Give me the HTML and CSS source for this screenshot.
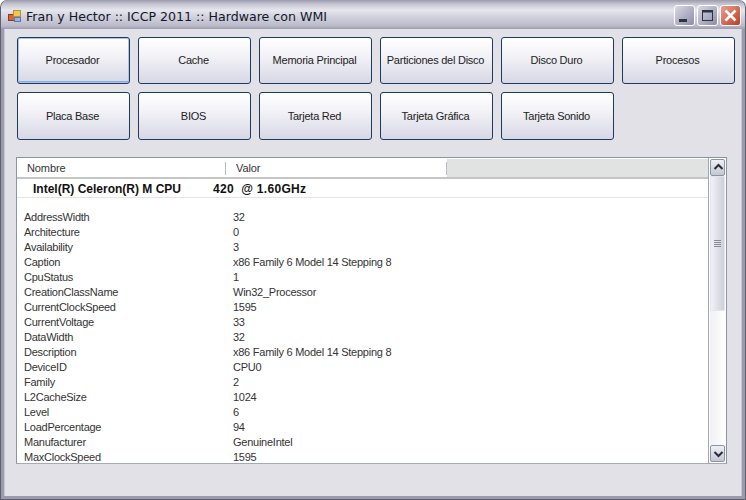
FILE: index.html
```html
<!DOCTYPE html>
<html lang="es">
<head>
<meta charset="utf-8">
<title>Fran y Hector :: ICCP 2011 :: Hardware con WMI</title>
<link rel="stylesheet" href="styles.css">
</head>
<body>
<div class="window">
  <header class="titlebar">
    <svg class="app-icon" width="16" height="16" viewBox="0 0 16 16">
      <rect x="1.5" y="6.5" width="6" height="6" fill="#d8623a" stroke="#8a3a20"/>
      <rect x="6.5" y="2.5" width="7" height="6" fill="#f2c84a" stroke="#b8923a"/>
      <rect x="7.5" y="9.5" width="6" height="4" fill="#9ab4e0" stroke="#5a78b0"/>
    </svg>
    <span class="title">Fran y Hector :: ICCP 2011 :: Hardware con WMI</span>
    <div class="controls">
      <div class="ctl ctl-min"><svg width="21" height="21" viewBox="0 0 21 21"><rect x="5" y="14" width="8" height="3" fill="#2c3444"/></svg></div>
      <div class="ctl ctl-max"><svg width="21" height="21" viewBox="0 0 21 21"><rect x="5.5" y="5.5" width="10" height="10" fill="none" stroke="#2c3444"/><rect x="5" y="5" width="11" height="2.5" fill="#2c3444"/></svg></div>
      <div class="ctl ctl-close"><svg width="21" height="21" viewBox="0 0 21 21"><path d="M5.5 5.5 15.5 15.5M15.5 5.5 5.5 15.5" stroke="#fff" stroke-width="2.6" fill="none"/></svg></div>
    </div>
  </header>
  <main class="client">
    <div class="buttons">
      <button class="btn btn-focus">Procesador</button>
      <button class="btn">Cache</button>
      <button class="btn">Memoria Principal</button>
      <button class="btn">Particiones del Disco</button>
      <button class="btn">Disco Duro</button>
      <button class="btn">Procesos</button>
      <button class="btn">Placa Base</button>
      <button class="btn">BIOS</button>
      <button class="btn">Tarjeta Red</button>
      <button class="btn">Tarjeta Gráfica</button>
      <button class="btn">Tarjeta Sonido</button>
    </div>
    <section class="list">
      <div class="list-main">
        <div class="list-head">
          <div class="hcol hcol-name">Nombre</div>
          <div class="hcol hcol-val">Valor</div>
          <div class="hcol-rest"></div>
        </div>
        <div class="cpu-row"><span class="cpu-name">Intel(R) Celeron(R) M CPU</span><span class="cpu-val">420&nbsp; @ 1.60GHz</span></div>
        <div class="rows">
          <div class="row"><span class="k">AddressWidth</span><span class="v">32</span></div>
          <div class="row"><span class="k">Architecture</span><span class="v">0</span></div>
          <div class="row"><span class="k">Availability</span><span class="v">3</span></div>
          <div class="row"><span class="k">Caption</span><span class="v">x86 Family 6 Model 14 Stepping 8</span></div>
          <div class="row"><span class="k">CpuStatus</span><span class="v">1</span></div>
          <div class="row"><span class="k">CreationClassName</span><span class="v">Win32_Processor</span></div>
          <div class="row"><span class="k">CurrentClockSpeed</span><span class="v">1595</span></div>
          <div class="row"><span class="k">CurrentVoltage</span><span class="v">33</span></div>
          <div class="row"><span class="k">DataWidth</span><span class="v">32</span></div>
          <div class="row"><span class="k">Description</span><span class="v">x86 Family 6 Model 14 Stepping 8</span></div>
          <div class="row"><span class="k">DeviceID</span><span class="v">CPU0</span></div>
          <div class="row"><span class="k">Family</span><span class="v">2</span></div>
          <div class="row"><span class="k">L2CacheSize</span><span class="v">1024</span></div>
          <div class="row"><span class="k">Level</span><span class="v">6</span></div>
          <div class="row"><span class="k">LoadPercentage</span><span class="v">94</span></div>
          <div class="row"><span class="k">Manufacturer</span><span class="v">GenuineIntel</span></div>
          <div class="row"><span class="k">MaxClockSpeed</span><span class="v">1595</span></div>
        </div>
      </div>
      <div class="scrollbar">
        <div class="sb-btn"><svg width="15" height="15" viewBox="0 0 15 15"><path d="M3.5 9 7.5 5 11.5 9" fill="none" stroke="#2c2c38" stroke-width="2"/></svg></div>
        <div class="sb-thumb"><svg width="7" height="7" viewBox="0 0 7 7"><path d="M0 .5H7M0 2.5H7M0 4.5H7M0 6.5H7" stroke="#8a8a98"/></svg></div>
        <div class="sb-track"></div>
        <div class="sb-btn"><svg width="15" height="15" viewBox="0 0 15 15"><path d="M3.5 6 7.5 10 11.5 6" fill="none" stroke="#2c2c38" stroke-width="2"/></svg></div>
      </div>
    </section>
  </main>
</div>
</body>
</html>
```
FILE: styles.css
```css
* { box-sizing: border-box; }
html, body { margin: 0; padding: 0; }
body { width: 746px; height: 500px; overflow: hidden; background: #fff; font-family: "Liberation Sans", Arial, sans-serif; }
.window {
  width: 746px; height: 500px; display: flex; flex-direction: column;
  background: linear-gradient(180deg, #9b9bad 0, #c4c4d2 4px, #e6e6ee 10px, #d4d4e0 16px, #b9b9c9 26px, #9c9cae 29px);
  background-repeat: no-repeat; background-size: 100% 29px; background-color: #9b9bad;
  border-radius: 7px 7px 0 0;
  box-shadow: inset 1px 0 #5f5f70, inset -1px 0 #5f5f70, inset 0 -1px #5f5f70;
}
.titlebar { height: 29px; flex: none; display: flex; align-items: center; padding: 3px 5px 0 7px; }
.app-icon { flex: none; margin-top: -1px; }
.title { margin-left: 3px; font-family: "DejaVu Sans", sans-serif; font-size: 12.6px; color: #101828; white-space: nowrap; }
.controls { margin-left: auto; display: flex; gap: 2px; margin-top: -2px; }
.ctl { width: 21px; height: 21px; border-radius: 3px; border: 1px solid #fff; }
.ctl svg { display: block; margin: -1px; }
.ctl-min, .ctl-max { background: linear-gradient(135deg, #d8d8e4, #8c8ca8); }
.ctl-close { background: linear-gradient(135deg, #e8a090, #c03c20); }
.client {
  flex: 1; margin: 0 4px 4px; padding: 8px 11px 0 12px; background: #e1e1e7;
  display: flex; flex-direction: column; box-shadow: inset 1px 0 #c8c8d0, inset -1px 0 #c8c8d0;
}
.buttons { display: grid; grid-template-columns: repeat(6, 113px); grid-template-rows: 47px 48px; gap: 8px; margin-left: 1px; }
.btn {
  padding: 0 2px 1px 0; font: 11px "Liberation Sans", Arial, sans-serif; letter-spacing: -0.25px; color: #222; white-space: nowrap;
  border: 1px solid #1f3a5c; border-radius: 3px;
  background: linear-gradient(180deg, #ffffff 0, #f4f4f8 35%, #d8d8e6 100%);
}
.btn-focus { box-shadow: inset 0 0 0 1px #a8c4ec, inset 0 -2px 0 #8aaae0; }
.list {
  margin-top: 17px; width: 711px; height: 307px; display: flex; background: #fff;
  border: 1px solid #8c94a4; border-bottom-color: #a4aab6;
}
.list-main { flex: 1; min-width: 0; overflow: hidden; }
.list-head {
  height: 21px; padding-top: 2px; display: flex; align-items: center; background: #fff; font-size: 11px; letter-spacing: -0.1px; color: #333;
  border-bottom: 2px solid #c4c6c6;
}
.hcol { height: 13px; line-height: 13px; padding-left: 10px; }
.hcol-name { width: 209px; border-right: 1px solid #b8bcc4; }
.hcol-val { width: 221px; border-right: 1px solid #b8bcc4; }
.hcol-rest { flex: 1; height: 18px; margin-top: -2px; background: #e1e3e3; }
.cpu-row { height: 19px; padding: 1px 0 0 16px; display: flex; align-items: center; font-size: 12px; font-weight: bold; color: #111; border-bottom: 1px solid #e4e4e8; }
.cpu-name { width: 180px; }
.cpu-val { letter-spacing: 0.3px; }
.rows { padding-top: 11px; }
.row { height: 15px; display: flex; align-items: center; font-size: 11px; letter-spacing: -0.25px; color: #333; white-space: nowrap; }
.k { width: 216px; padding-left: 7px; }
.v { flex: 1; }
.scrollbar { flex: none; width: 18px; display: flex; flex-direction: column; padding: 1px; background: #fff; border-left: 1px solid #a0a6b2; }
.sb-btn { height: 17px; flex: none; border: 1px solid #8c94a4; border-radius: 2px; background: linear-gradient(180deg, #f0f0f6, #c4c6d4); }
.sb-btn svg { display: block; }
.sb-thumb {
  height: 135px; flex: none; display: flex; align-items: center; justify-content: center;
  border-radius: 2px; background: linear-gradient(90deg, #f4f4fa, #dcdce6 60%, #ccccd8);
  box-shadow: inset 0 0 0 1px #e4e4ec;
}
.sb-thumb svg { display: block; }
.sb-track { flex: 1; background: linear-gradient(90deg, #f0f0f6, #fff); }
```
